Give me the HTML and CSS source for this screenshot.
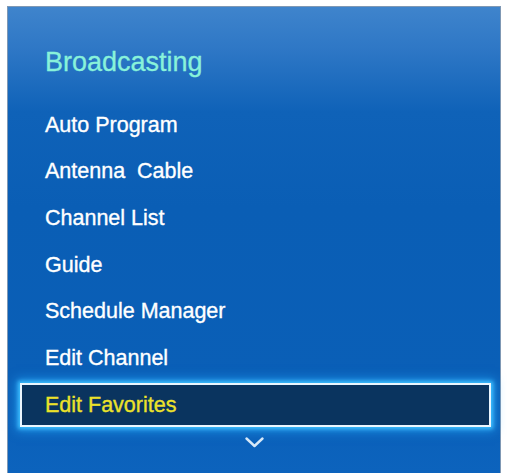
FILE: index.html
```html
<!DOCTYPE html>
<html>
<head>
<meta charset="utf-8">
<link rel="stylesheet" href="styles.css">
</head>
<body>
<div class="panel">
  <div class="title">Broadcasting</div>
  <ul class="menu">
    <li class="item">Auto Program</li>
    <li class="item">Antenna&nbsp; Cable</li>
    <li class="item">Channel List</li>
    <li class="item">Guide</li>
    <li class="item">Schedule Manager</li>
    <li class="item">Edit Channel</li>
    <li class="item selected">Edit Favorites</li>
  </ul>
  <div class="more">
    <svg width="19" height="11" viewBox="0 0 19 11"><path d="M1.5 1.5 L9.5 9 L17.5 1.5" fill="none" stroke="#d6e8f8" stroke-width="2.4" stroke-linecap="round" stroke-linejoin="round"/></svg>
  </div>
</div>
</body>
</html>
```
FILE: styles.css
```css
html, body {
  margin: 0;
  padding: 0;
  background: #ffffff;
}
body {
  font-family: "Liberation Sans", Arial, sans-serif;
  width: 507px;
  height: 473px;
  overflow: hidden;
}
.panel {
  box-sizing: border-box;
  margin: 6px 6px 0 7px;
  height: 467px;
  border: 1px solid #7f98b4;
  border-bottom: none;
  background: linear-gradient(180deg, #3f84cc 0px, #2f78c6 40px, #0f62b8 105px, #0a5eb5 200px, #0a5fb7 380px, #0c63bd 467px);
  display: flex;
  flex-direction: column;
}
.title {
  box-sizing: border-box;
  height: 94.5px;
  padding: 42px 0 0 37px;
  font-size: 27px;
  line-height: 27px;
  color: #88f2da;
  -webkit-text-stroke: 0.3px #88f2da;
}
.menu {
  list-style: none;
  margin: 0;
  padding: 0;
}
.item {
  height: 46.7px;
  line-height: 46.7px;
  padding-left: 37px;
  font-size: 21.5px;
  color: #ffffff;
  -webkit-text-stroke: 0.35px #ffffff;
  white-space: nowrap;
}
.item.selected {
  box-sizing: border-box;
  height: 44px;
  line-height: 40px;
  margin: 1.35px 9px 1.35px 12px;
  padding-left: 23px;
  border: 2px solid #eaf6ff;
  background: #0a345f;
  color: #ece22a;
  -webkit-text-stroke: 0.35px #ece22a;
  box-shadow: 0 0 4px 2px #3ec0ff, 0 0 10px 4px rgba(40,170,255,0.6);
}
.more {
  display: flex;
  justify-content: center;
  padding-top: 9px;
  padding-left: 1px;
}
.more svg {
  display: block;
}
```
